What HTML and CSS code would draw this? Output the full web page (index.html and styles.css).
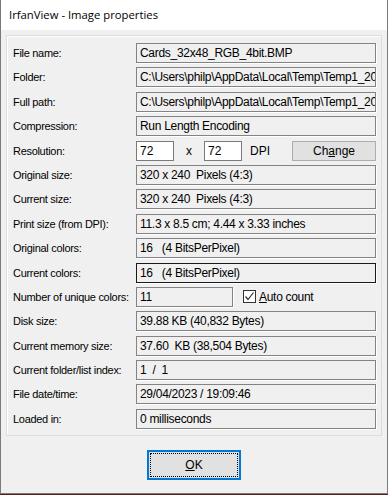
FILE: index.html
```html
<!DOCTYPE html>
<html lang="en">
<head>
    <meta charset="UTF-8">
    <title>IrfanView - Image properties</title>
    <link rel="stylesheet" href="styles.css">
</head>
<body>
    <div class="window">
        <div class="titlebar">IrfanView - Image properties</div>
        <div class="client">
            <div class="group">
                <div class="row"><span class="label">File name:</span><span class="field">Cards_32x48_RGB_4bit.BMP</span></div>
                <div class="row"><span class="label">Folder:</span><span class="field">C:\Users\philp\AppData\Local\Temp\Temp1_20</span></div>
                <div class="row"><span class="label">Full path:</span><span class="field">C:\Users\philp\AppData\Local\Temp\Temp1_20</span></div>
                <div class="row"><span class="label">Compression:</span><span class="field">Run Length Encoding</span></div>
                <div class="row">
                    <span class="label">Resolution:</span>
                    <div class="res">
                        <span class="input">72</span>
                        <span class="times">x</span>
                        <span class="input">72</span>
                        <span class="dpi">DPI</span>
                        <button class="btn change">Ch<u>a</u>nge</button>
                    </div>
                </div>
                <div class="row"><span class="label">Original size:</span><span class="field">320 x 240&nbsp; Pixels (4:3)</span></div>
                <div class="row"><span class="label">Current size:</span><span class="field">320 x 240&nbsp; Pixels (4:3)</span></div>
                <div class="row"><span class="label">Print size (from DPI):</span><span class="field">11.3 x 8.5 cm; 4.44 x 3.33 inches</span></div>
                <div class="row"><span class="label">Original colors:</span><span class="field">16&nbsp;&nbsp; (4 BitsPerPixel)</span></div>
                <div class="row"><span class="label">Current colors:</span><span class="field dark">16&nbsp;&nbsp; (4 BitsPerPixel)</span></div>
                <div class="row">
                    <span class="label">Number of unique colors:</span>
                    <div class="unique">
                        <span class="field short">11</span>
                        <label class="check"><span class="box"><svg width="11" height="11" viewBox="0 0 11 11"><path d="M1.5 5.5 L4 8.5 L9.5 1.5" fill="none" stroke="#333" stroke-width="1.2"/></svg></span><span><u>A</u>uto count</span></label>
                    </div>
                </div>
                <div class="row"><span class="label">Disk size:</span><span class="field">39.88 KB (40,832 Bytes)</span></div>
                <div class="row"><span class="label">Current memory size:</span><span class="field">37.60&nbsp; KB (38,504 Bytes)</span></div>
                <div class="row"><span class="label">Current folder/list index:</span><span class="field">1&nbsp; /&nbsp; 1</span></div>
                <div class="row"><span class="label">File date/time:</span><span class="field">29/04/2023 / 19:09:46</span></div>
                <div class="row"><span class="label">Loaded in:</span><span class="field">0 milliseconds</span></div>
            </div>
            <div class="actions">
                <button class="btn ok"><span class="focus"><u>O</u>K</span></button>
            </div>
        </div>
    </div>
</body>
</html>
```
FILE: styles.css
```css
body {
    margin: 0;
    background: #5a1e16;
    font-family: "Liberation Sans", Arial, sans-serif;
    font-size: 11px;
    color: #000;
}
.window {
    width: 386px;
    height: 493px;
    border: 1px solid #7a7a7a;
    border-top: none;
    background: #f0f0f0;
    display: flex;
    flex-direction: column;
}
.titlebar {
    height: 30px;
    background: #fff;
    font-family: "Segoe UI", "Open Sans", sans-serif;
    font-size: 11.3px;
    line-height: 30px;
    padding-left: 8px;
}
.client {
    padding: 5px 5px 0 5px;
}
.group {
    height: 392px;
    border: 1px solid #dcdcdc;
    box-shadow: inset 1px 1px 0 #fff;
    padding: 7px 5px 0 6px;
    display: flex;
    flex-direction: column;
    gap: 4.4px;
}
.row {
    display: flex;
    align-items: center;
    height: 20px;
}
.label {
    width: 123px;
    flex: none;
    letter-spacing: -0.3px;
}
.field {
    width: 240px;
    height: 20px;
    box-sizing: border-box;
    border: 1px solid #838383;
    box-shadow: 1px 1px 0 #fff;
    padding: 0 3px;
    line-height: 18px;
    white-space: nowrap;
    overflow: hidden;
    font-size: 12px;
    letter-spacing: -0.3px;
}
.field.dark {
    border-color: #1a1a1a;
}
.field.short {
    width: 97px;
}
.res, .unique {
    display: flex;
    align-items: center;
    height: 20px;
}
.input {
    width: 38px;
    height: 20px;
    box-sizing: border-box;
    border: 1px solid #7a7a7a;
    background: #fff;
    padding: 0 3px;
    line-height: 18px;
    font-size: 12px;
}
.times {
    width: 30px;
    text-align: center;
    font-size: 12px;
}
.dpi {
    width: 50px;
    padding-left: 8px;
    box-sizing: border-box;
    font-size: 12px;
}
.btn {
    background: #e1e1e1;
    border: 1px solid #adadad;
    font-family: inherit;
    font-size: 12px;
    color: #000;
    padding: 0;
}
.change {
    width: 84px;
    height: 20px;
}
.check {
    display: flex;
    align-items: center;
    gap: 3px;
    margin-left: 10px;
    font-size: 12px;
    letter-spacing: -0.3px;
}
.box {
    width: 13px;
    height: 13px;
    box-sizing: border-box;
    border: 1px solid #333;
    background: #fff;
    display: flex;
    align-items: center;
    justify-content: center;
}
.actions {
    display: flex;
    justify-content: center;
    padding-top: 14px;
}
.ok {
    width: 94px;
    height: 30px;
    border: 2px solid #0078d7;
    display: flex;
    padding: 1px;
}
.focus {
    flex: 1;
    border: 1px dotted #000;
    display: flex;
    align-items: center;
    justify-content: center;
    font-size: 12px;
}
```
